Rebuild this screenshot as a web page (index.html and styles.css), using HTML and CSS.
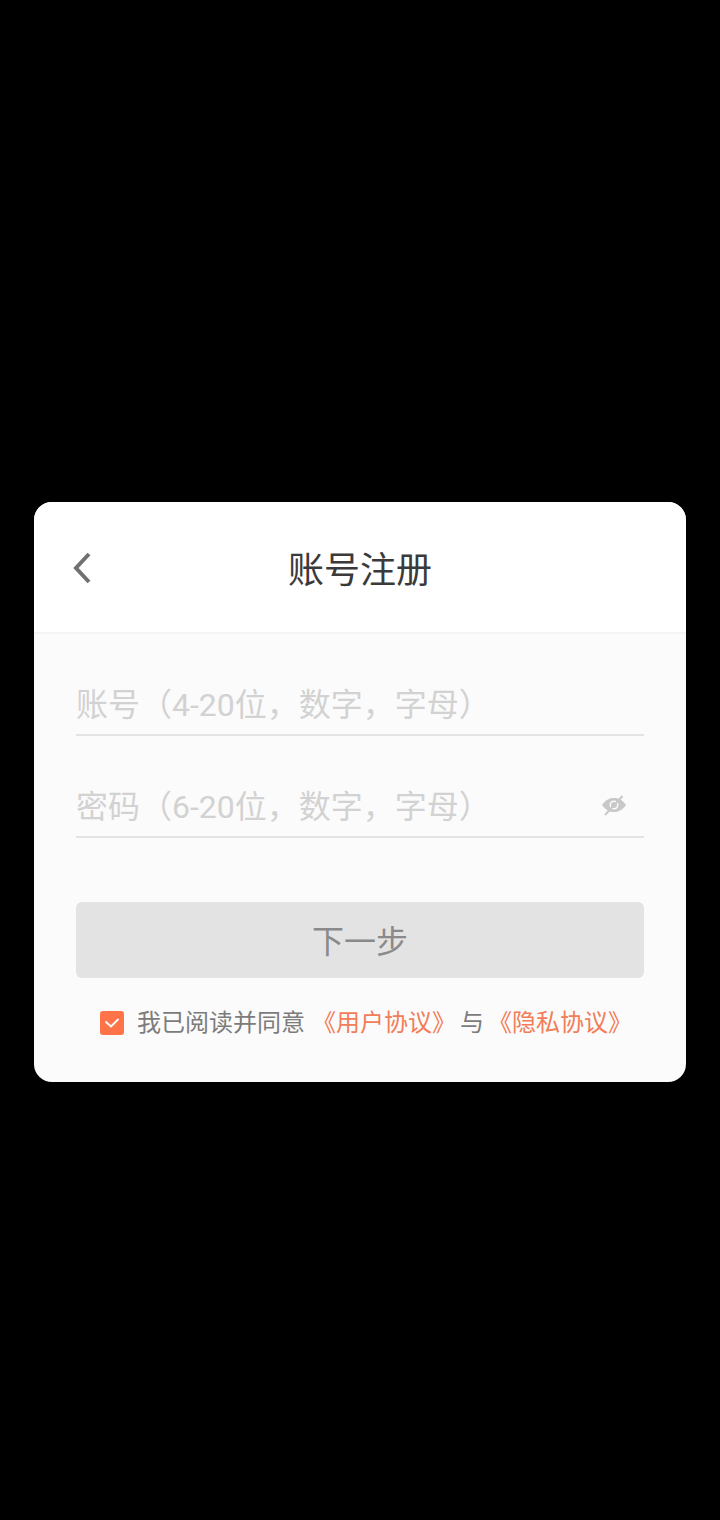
FILE: index.html
```html
<!DOCTYPE html>
<html lang="zh-CN">
<head>
    <meta charset="UTF-8">
    <meta name="viewport" content="width=device-width, initial-scale=1.0">
    <title>账号注册</title>
    <link rel="stylesheet" href="styles.css">
</head>
<body>
    <div class="dialog">
        <header class="dialog-header">
            <svg class="back-icon" viewBox="0 0 20 32" width="20" height="32">
                <path d="M17 2 L4 16 L17 30" fill="none" stroke="#717171" stroke-width="4"/>
            </svg>
            <h1>账号注册</h1>
        </header>
        <div class="dialog-body">
            <div class="field field-account">
                <span class="placeholder">账号（4-20位，数字，字母）</span>
            </div>
            <div class="field field-password">
                <span class="placeholder">密码（6-20位，数字，字母）</span>
                <svg class="eye-icon" viewBox="0 0 24 24" width="24" height="24">
                    <path fill-rule="evenodd" fill="#c8c8c8" d="M0 12 C4 6.500 8 5 12 5 C16 5 20 6.500 24 12 C20 17.500 16 19 12 19 C8 19 4 17.500 0 12 Z M12 7.500 A4.500 4.500 0 1 0 12 16.500 A4.500 4.500 0 1 0 12 7.500 Z"/>
                    <circle cx="12" cy="12" r="3" fill="#c8c8c8"/>
                    <path d="M3 22 L20.500 3" stroke="#c8c8c8" stroke-width="2"/>
                </svg>
            </div>
            <button class="next-button">下一步</button>
            <div class="agreement">
                <span class="checkbox">
                    <svg viewBox="0 0 24 24" width="24" height="24">
                        <path d="M5.500 10.500 L11 15.500 L18.500 8" fill="none" stroke="#fff" stroke-width="1.800"/>
                    </svg>
                </span>
                <span class="agree-text">我已阅读并同意</span>
                <a class="agree-link">《用户协议》</a>
                <span class="agree-and">与</span>
                <a class="agree-link">《隐私协议》</a>
            </div>
        </div>
    </div>
</body>
</html>
```

FILE: styles.css
```css
* {
    box-sizing: border-box;
    margin: 0;
    padding: 0;
}

html,
body {
    height: 100%;
}

body {
    display: flex;
    justify-content: center;
    padding-top: 502px;
    background: #000;
    font-family: "Roboto", "Noto Sans CJK SC", sans-serif;
}

.dialog {
    width: 652px;
    height: 580px;
    border-radius: 18px;
    overflow: hidden;
    background: #fbfbfb;
    display: flex;
    flex-direction: column;
}

.dialog-header {
    height: 132px;
    flex-shrink: 0;
    padding-top: 8px;
    background: #fff;
    border-bottom: 2px solid #f4f4f4;
    display: flex;
    align-items: center;
    justify-content: center;
    position: relative;
}

.dialog-header h1 {
    font-size: 36px;
    font-weight: 400;
    color: #3a3a3a;
    line-height: 48px;
}

.back-icon {
    position: absolute;
    left: 38px;
    top: 50px;
}

.dialog-body {
    flex: 1;
    padding: 0 42px;
    display: flex;
    flex-direction: column;
}

.field {
    height: 64px;
    border-bottom: 2px solid #e3e3e3;
    display: flex;
    align-items: center;
    justify-content: space-between;
}

.field-account {
    margin-top: 38px;
}

.field-password {
    margin-top: 38px;
    padding-right: 18px;
}

.placeholder {
    margin-top: 4px;
    font-size: 32px;
    color: #d2d2d2;
    line-height: 44px;
}

.next-button {
    margin-top: 64px;
    height: 76px;
    padding-bottom: 2px;
    border: none;
    border-radius: 6px;
    background: #e3e3e3;
    color: #8a8a8a;
    font-family: inherit;
    font-size: 32px;
}

.agreement {
    margin-top: 31px;
    padding-left: 24px;
    display: flex;
    align-items: center;
    font-size: 24px;
    line-height: 28px;
    white-space: nowrap;
}

.checkbox {
    width: 24px;
    height: 24px;
    border-radius: 3px;
    background: #ff7349;
    margin-right: 13px;
    display: flex;
}

.agree-text,
.agree-and {
    color: #7c7c7c;
}

.agree-text {
    margin-right: 7px;
}

.agree-and {
    margin: 0 4px;
}

.agree-link {
    color: #f27d58;
}
```
